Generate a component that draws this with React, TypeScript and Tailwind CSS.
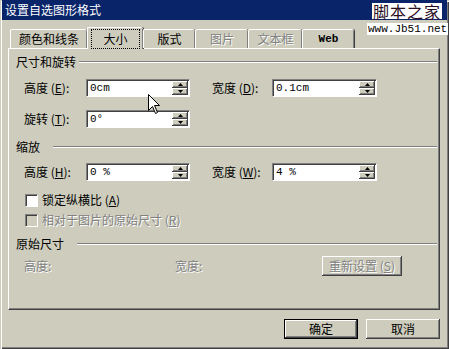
import React from "react";

const raised =
  "bg-[#cecdbd] shadow-[inset_-1px_-1px_0_#404040,inset_1px_1px_0_#ffffff,inset_-2px_-2px_0_#808080]";

const Arrow = ({ up }: { up: boolean }) => (
  <svg width="5" height="3" viewBox="0 0 5 3">
    <polygon points={up ? "2.5,0 5,3 0,3" : "0,0 5,0 2.5,3"} fill="#000" />
  </svg>
);

const SpinBox = ({ value, width }: { value: string; width: number }) => (
  <div
    className="h-[18px] bg-white border border-t-[#808080] border-l-[#808080] border-b-white border-r-white shadow-[inset_1px_1px_0_#404040] flex items-center pl-[3px] pr-[1px]"
    style={{ width }}
  >
    <span className="font-['Liberation_Mono',monospace] text-[11px] leading-none text-black whitespace-pre">
      {value}
    </span>
    <div className="ml-auto flex flex-col w-[16px] h-[14px]">
      <div className={`h-[7px] flex items-center justify-center ${raised}`}>
        <Arrow up />
      </div>
      <div className={`h-[7px] flex items-center justify-center ${raised}`}>
        <Arrow up={false} />
      </div>
    </div>
  </div>
);

const Label = ({
  text,
  keyChar,
  className,
}: {
  text: string;
  keyChar: string;
  className: string;
}) => (
  <div className={`text-[12px] leading-[16px] text-black ${className}`}>
    {text} (<u>{keyChar}</u>):
  </div>
);

const GroupHeader = ({ title, gap }: { title: string; gap: number }) => (
  <div className="flex items-center pl-[7px] pr-[2px] h-[16px]">
    <span className="text-[12px] leading-[16px] text-black">{title}</span>
    <div
      className="flex-1 h-[2px] border-t border-t-[#808080] border-b border-b-white"
      style={{ marginLeft: gap }}
    />
  </div>
);

const tabs = [
  { name: "颜色和线条", w: 77 },
  { name: "大小", w: 56, active: true },
  { name: "版式", w: 52 },
  { name: "图片", w: 53, disabled: true },
  { name: "文本框", w: 54, disabled: true },
  { name: "Web", w: 52, latin: true },
];

const disabledText = "text-[#808080] [text-shadow:1px_1px_0_#ffffff]";

const App: React.FC = () => {
  return (
    <div className="relative w-[449px] h-[349px] overflow-hidden bg-[#cecdbd] font-['Noto_Sans_CJK_SC','Noto_Sans',sans-serif] shadow-[inset_1px_1px_0_#cecdbd,inset_2px_2px_0_#ffffff,inset_-1px_-1px_0_#404040,inset_-2px_-2px_0_#808080]">
      {/* title bar */}
      <div className="h-[20px] ml-[2px] mr-[2px] bg-[#0a246a] flex items-center pl-[3px]">
        <span className="text-white text-[12px] leading-none">设置自选图形格式</span>
      </div>

      {/* tabs */}
      <div className="relative z-10 flex items-start h-[22px] mt-[7px] ml-[10px]">
        {tabs.map((t) => (
          <div
            key={t.name}
            className={`flex items-center justify-center bg-[#cecdbd] border-t border-l border-t-white border-l-white rounded-t-[2px] shadow-[inset_-1px_0_0_#808080,1px_0_0_#404040] ${
              t.active ? "h-[22px]" : "h-[19px] mt-[2px]"
            }`}
            style={{ width: t.w }}
          >
            <span
              className={`${
                t.active
                  ? "outline-1 outline-dotted outline-black outline-offset-[1px] px-[10px]"
                  : ""
              } ${t.disabled ? disabledText : "text-black"} ${
                t.latin
                  ? "font-['Liberation_Mono',monospace] text-[11px] font-bold"
                  : "text-[12px]"
              } leading-[16px]`}
            >
              {t.name}
            </span>
          </div>
        ))}
      </div>

      {/* panel */}
      <div className="relative -mt-[1px] ml-[8px] w-[432px] h-[262px] border-t border-l border-t-white border-l-white border-r border-b border-r-[#404040] border-b-[#404040] shadow-[inset_-1px_-1px_0_#808080]">
        <div className="pt-[5px]">
          <GroupHeader title="尺寸和旋转" gap={3} />

          <div className="flex items-center mt-[9px] pl-[15px]">
            <Label text="高度" keyChar="E" className="w-[62px]" />
            <SpinBox value="0cm" width={104} />
            <Label text="宽度" keyChar="D" className="w-[60px] ml-[22px]" />
            <SpinBox value="0.1cm" width={105} />
          </div>

          <div className="flex items-center mt-[13px] pl-[15px]">
            <Label text="旋转" keyChar="T" className="w-[62px]" />
            <SpinBox value="0°" width={104} />
          </div>

          <div className="mt-[11px]">
            <GroupHeader title="缩放" gap={13} />
          </div>

          <div className="flex items-center mt-[8px] pl-[15px]">
            <Label text="高度" keyChar="H" className="w-[62px]" />
            <SpinBox value="0 %" width={104} />
            <Label text="宽度" keyChar="W" className="w-[60px] ml-[22px]" />
            <SpinBox value="4 %" width={105} />
          </div>

          <div className="flex items-center mt-[11px] pl-[16px] h-[16px]">
            <div className="w-[13px] h-[13px] bg-white border border-t-[#808080] border-l-[#808080] border-b-white border-r-white shadow-[inset_1px_1px_0_#404040]" />
            <span className="ml-[4px] text-[12px] leading-[16px] text-black">
              锁定纵横比 (<u>A</u>)
            </span>
          </div>

          <div className="flex items-center mt-[4px] pl-[16px] h-[16px]">
            <div className="w-[13px] h-[13px] bg-[#cecdbd] border border-t-[#808080] border-l-[#808080] border-b-white border-r-white shadow-[inset_1px_1px_0_#404040]" />
            <span className={`ml-[4px] text-[12px] leading-[16px] ${disabledText}`}>
              相对于图片的原始尺寸 (<u>R</u>)
            </span>
          </div>

          <div className="mt-[8px]">
            <GroupHeader title="原始尺寸" gap={13} />
          </div>

          <div className="flex items-center mt-[4px] pl-[15px] h-[20px]">
            <span className={`w-[151px] text-[12px] leading-[16px] ${disabledText}`}>
              高度:
            </span>
            <span className={`w-[147px] text-[12px] leading-[16px] ${disabledText}`}>
              宽度:
            </span>
            <div
              className={`w-[80px] h-[20px] flex items-center justify-center ${raised}`}
            >
              <span className={`text-[12px] leading-[16px] ${disabledText}`}>
                重新设置 (<u>S</u>)
              </span>
            </div>
          </div>
        </div>
      </div>

      {/* dialog buttons */}
      <div className="flex justify-end gap-[8px] ml-[8px] w-[432px] mt-[9px]">
        <div className="w-[74px] h-[20px] border border-black">
          <div className={`w-full h-full flex items-center justify-center ${raised}`}>
            <span className="text-[12px] leading-[16px] text-black">确定</span>
          </div>
        </div>
        <div className={`w-[74px] h-[20px] flex items-center justify-center ${raised}`}>
          <span className="text-[12px] leading-[16px] text-black">取消</span>
        </div>
      </div>

      {/* watermark */}
      <div className="absolute left-[372px] top-[3px] bg-white px-[1px] text-[16px] leading-[16px] text-[#2a0d1e] tracking-[1px]">
        脚本之家
      </div>
      <div className="absolute left-[367px] top-[23px] bg-white px-[1px] font-['Liberation_Mono',monospace] text-[11px] leading-[12px] text-black">
        www.Jb51.net
      </div>

      {/* mouse cursor */}
      <svg
        className="absolute left-[148px] top-[94px]"
        width="13"
        height="21"
        viewBox="0 0 13 21"
      >
        <path
          d="M0.5 0.5 L0.5 16.5 L4.5 12.5 L7.5 19.5 L9.5 18.5 L6.5 11.5 L11.5 11.5 Z"
          fill="#fff"
          stroke="#000"
          strokeWidth="1"
        />
      </svg>
    </div>
  );
};

export default App;
